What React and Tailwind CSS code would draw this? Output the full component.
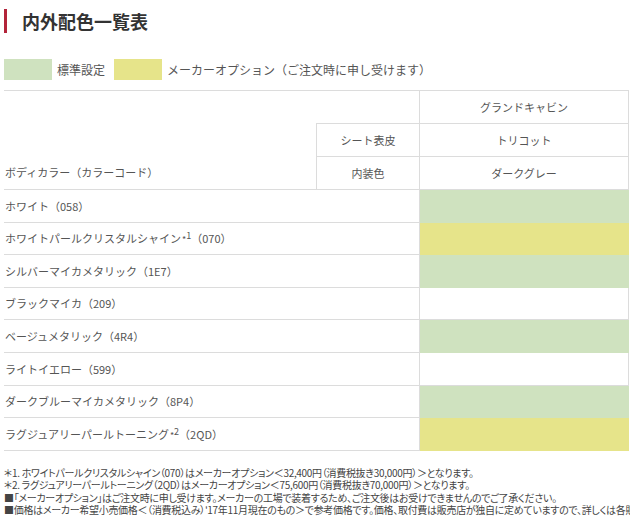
const rows = [
  { name: "ホワイト", code: "（058）", color: "green" },
  { name: "ホワイトパールクリスタルシャイン", note: "1", code: "（070）", color: "yellow" },
  { name: "シルバーマイカメタリック", code: "（1E7）", color: "green" },
  { name: "ブラックマイカ", code: "（209）", color: "white" },
  { name: "ベージュメタリック", code: "（4R4）", color: "green" },
  { name: "ライトイエロー", code: "（599）", color: "white" },
  { name: "ダークブルーマイカメタリック", code: "（8P4）", color: "green" },
  { name: "ラグジュアリーパールトーニング", note: "2", code: "（2QD）", color: "yellow" },
];

const notes = [
  "＊1. ホワイトパールクリスタルシャイン（070）はメーカーオプション＜32,400円（消費税抜き30,000円）＞となります。",
  "＊2. ラグジュアリーパールトーニング（2QD）はメーカーオプション＜75,600円（消費税抜き70,000円）＞となります。",
  "■「メーカーオプション」はご注文時に申し受けます。メーカーの工場で装着するため、ご注文後はお受けできませんのでご了承ください。",
  "■価格はメーカー希望小売価格＜（消費税込み）'17年11月現在のもの＞で参考価格です。価格、取付費は販売店が独自に定めていますので、詳しくは各販売店にお問い合わせください。",
];

function ColorCell({ color }) {
  if (color === "green") return <div className="flex-1 bg-[#cfe2bf]" />;
  if (color === "yellow") return <div className="flex-1 bg-[#e6e48a]" />;
  return <div className="flex-1 border-b border-r border-[#dcdcdc]" />;
}

export default function App() {
  return (
    <div className="w-[630px] h-[517px] overflow-hidden bg-white text-[#555] font-['Noto_Sans_CJK_JP',sans-serif]">
      {/* title */}
      <div className="flex items-center pt-[9px]">
        <div className="ml-[4px] w-[3px] h-[24px] bg-[#b3243a]" />
        <h2 className="ml-[15px] text-[18px] font-bold leading-[24px] text-[#333]">内外配色一覧表</h2>
      </div>

      {/* legend */}
      <div className="flex items-center mt-[26px] ml-[4px] text-[12px]">
        <div className="w-[48px] h-[21px] bg-[#cfe2bf]" />
        <span className="ml-[5px]">標準設定</span>
        <div className="ml-[9px] w-[48px] h-[21px] bg-[#e6e48a]" />
        <span className="ml-[5px]">メーカーオプション（ご注文時に申し受けます）</span>
      </div>

      {/* table */}
      <div className="mt-[10px] ml-[4px] w-[625px] border-t border-[#dcdcdc] text-[11px]">
        <div className="flex">
          <div className="w-[312px] h-[99px] flex items-end border-b border-[#dcdcdc]">
            <div className="h-[33px] flex items-center pl-[1px]">ボディカラー（カラーコード）</div>
          </div>
          <div className="flex-1 flex flex-col">
            <div className="flex h-[33px] border-b border-[#dcdcdc]">
              <div className="w-[104px] border-r border-[#dcdcdc]" />
              <div className="flex-1 flex items-center justify-center border-r border-[#dcdcdc]">グランドキャビン</div>
            </div>
            <div className="flex h-[33px] border-b border-[#dcdcdc]">
              <div className="w-[104px] flex items-center justify-center border-l border-r border-[#dcdcdc]">シート表皮</div>
              <div className="flex-1 flex items-center justify-center border-r border-[#dcdcdc]">トリコット</div>
            </div>
            <div className="flex h-[33px] border-b border-[#dcdcdc]">
              <div className="w-[104px] flex items-center justify-center border-l border-r border-[#dcdcdc]">内装色</div>
              <div className="flex-1 flex items-center justify-center border-r border-[#dcdcdc]">ダークグレー</div>
            </div>
          </div>
        </div>

        {rows.map((r) => (
          <div key={r.name} className="flex h-[32.6px]">
            <div className="w-[416px] flex items-center pl-[1px] border-b border-r border-[#dcdcdc]">
              <span>{r.name}</span>
              {r.note && (
                <span className="ml-[1px]">
                  <span className="text-[9px]">*</span>
                  <span className="text-[9px] relative -top-[4px]">{r.note}</span>
                </span>
              )}
              <span>{r.code}</span>
            </div>
            <ColorCell color={r.color} />
          </div>
        ))}
      </div>

      {/* notes */}
      <div className="mt-[16px] ml-[4px] text-[10px] leading-[12.5px] tracking-[-0.3px] text-[#444] [font-feature-settings:'palt']">
        {notes.map((n) => (
          <p key={n} className="whitespace-nowrap">{n}</p>
        ))}
      </div>
    </div>
  );
}
